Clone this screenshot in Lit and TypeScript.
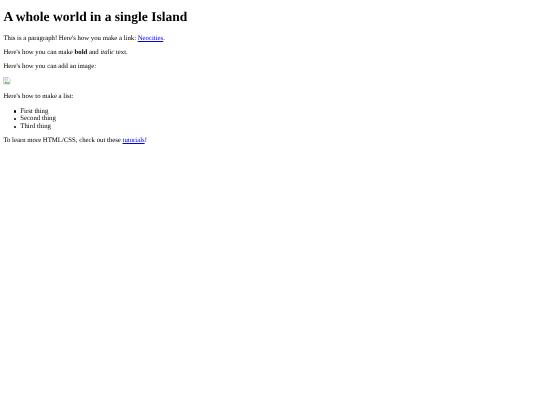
import { LitElement, html, css } from "lit";
import { customElement } from "lit/decorators.js";

@customElement("app-root")
export class AppRoot extends LitElement {
  static styles = css`
    :host {
      display: block;
      padding: 3.4px;
      font-family: "Liberation Serif", "Times New Roman", serif;
      font-size: 6.75px;
      line-height: 7.6px;
      text-rendering: geometricPrecision;
      color: #000;
      background: #fff;
      filter: blur(0.2px);
    }
    h1 {
      font-size: 13.5px;
      line-height: 15.5px;
      font-weight: bold;
      margin: 5.2px 0 10.7px;
    }
    p {
      margin: 6.6px 0;
    }
    a {
      color: #0000ee;
      text-decoration: underline;
    }
    ul {
      margin: 6.6px 0;
      padding-left: 10.2px;
      list-style: none;
    }
    li {
      display: flex;
      align-items: center;
      gap: 4.6px;
    }
    li::before {
      content: "";
      width: 2.2px;
      height: 2.2px;
      border-radius: 50%;
      background: #000;
    }
    .broken {
      display: block;
      width: 7.5px;
      height: 7.5px;
      padding-bottom: 2px;
    }
  `;

  render() {
    return html`
      <h1>A whole world in a single Island</h1>
      <p>This is a paragraph! Here's how you make a link: <a href="#">Neocities</a>.</p>
      <p>Here's how you can make <strong>bold</strong> and <em>italic</em> text.</p>
      <p>Here's how you can add an image:</p>
      <p>
        <svg class="broken" viewBox="0 0 16 16" aria-hidden="true">
          <path d="M1 1h10l4 4v10H1z" fill="#fff" stroke="#b5b5b5" stroke-width="1.5" />
          <path d="M2.5 3h8v5H2.5z" fill="#c6d6f5" />
          <path d="M2.5 14l3.5-5 3 3 2-2 3 3v1H2.5z" fill="#5aa552" />
        </svg>
      </p>
      <p>Here's how to make a list:</p>
      <ul>
        <li>First thing</li>
        <li>Second thing</li>
        <li>Third thing</li>
      </ul>
      <p>To learn more HTML/CSS, check out these <a href="#">tutorials</a>!</p>
    `;
  }
}
